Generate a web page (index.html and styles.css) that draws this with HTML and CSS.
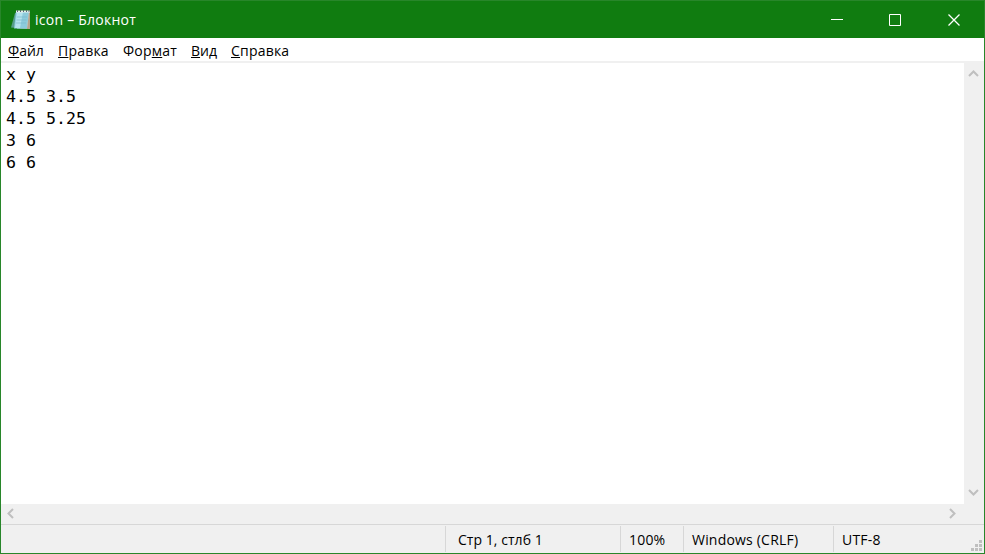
FILE: index.html
```html
<!DOCTYPE html>
<html lang="ru">
<head>
<meta charset="utf-8">
<title>icon – Блокнот</title>
<link rel="stylesheet" href="styles.css">
</head>
<body>
<div class="window">
  <header class="titlebar">
    <svg class="app-icon" width="22" height="22" viewBox="0 0 22 22">
      <path d="M4 4 0 18.500 16 20 18 3z" fill="#579d8b"/>
      <path d="M5 2h14v17.500H6z" fill="#d8e2dd"/>
      <path d="M5 2.500h13L16 19.500H3z" fill="#8ccbdc"/>
      <path d="M6 3h6L9 19H4z" fill="#b4e3ed"/>
      <path d="M18 3 16 20h3V3z" fill="#b4a38c"/>
      <path d="M6 8h10M5.500 11h10M5 14h10" stroke="#79b9cb" stroke-width=".7"/>
      <path d="M5 2.500h14" stroke="#e8eeee" stroke-width="2"/>
      <path d="M6.500 1v2M9.500 1v2M12.500 1v2M15.500 1v2M18 1v2" stroke="#596c70"/>
    </svg>
    <h1 class="title">icon – Блокнот</h1>
    <div class="controls">
      <svg width="58" height="36" viewBox="0 0 58 36"><path d="M20 17.5h12"/></svg>
      <svg width="58" height="36" viewBox="0 0 58 36"><path d="M20.500 12.500h11v11h-11z"/></svg>
      <svg width="58" height="36" viewBox="0 0 58 36"><path class="close" d="m21.500 12.500 11 11m0-11-11 11"/></svg>
    </div>
  </header>
  <nav class="menu">
    <span class="file"><u>Ф</u>айл</span>
    <span class="edit"><u>П</u>равка</span>
    <span class="format">Фор<u>м</u>ат</span>
    <span class="view"><u>В</u>ид</span>
    <span class="help"><u>С</u>правка</span>
  </nav>
  <main class="editor">
    <pre class="text">x y
4.5 3.5
4.5 5.25
3 6
6 6</pre>
    <div class="scroll-y">
      <svg width="20" height="20" viewBox="0 0 20 20"><path d="m5 13 4.500-4.500L14 13"/></svg>
      <svg width="20" height="20" viewBox="0 0 20 20"><path d="m5 6 4.500 4.500L14 6"/></svg>
    </div>
  </main>
  <div class="scroll-x">
    <svg width="20" height="20" viewBox="0 0 20 20"><path d="m12 5-4.500 4.500L12 14"/></svg>
    <svg width="20" height="20" viewBox="0 0 20 20"><path d="m6 5 4.500 4.500L6 14"/></svg>
  </div>
  <footer class="status">
    <div class="cell blank"></div>
    <div class="cell position"><span>Стр 1, стлб 1</span></div>
    <div class="cell zoom"><span>100%</span></div>
    <div class="cell eol"><span>Windows (CRLF)</span></div>
    <div class="cell encoding"><span>UTF-8</span></div>
    <svg class="grip" width="11" height="11" viewBox="0 0 11 11"><path d="M8 0h3v3H8zM4 4h3v3H4zM8 4h3v3H8zM0 8h3v3H0zM4 8h3v3H4zM8 8h3v3H8z"/></svg>
  </footer>
</div>
</body>
</html>
```
FILE: styles.css
```css
* { box-sizing: border-box; }
body { margin: 0; overflow: hidden; font: 14px/20px "Open Sans", "Noto Sans", sans-serif; color: #000; }
svg { display: block; flex: none; }
.window { width: 985px; height: 554px; display: flex; flex-direction: column; border: 1px solid #28862a; background: #fff; }
.titlebar { height: 37px; flex: none; display: flex; align-items: center; background: #107c10; color: #fff; padding-left: 10px; }
.title { margin: 0 0 0 2px; font-size: 14px; font-weight: 400; letter-spacing: .25px; white-space: nowrap; }
.controls { display: flex; margin-left: auto; margin-right: -1px; }
.controls path { fill: none; stroke: #fff; }
.controls .close { stroke-width: 1.3; }
.menu { height: 25px; flex: none; display: flex; gap: 14px; padding: 3px 0 0 7px; border-bottom: 2px solid #f0f0f0; white-space: nowrap; letter-spacing: .2px; }
.menu u { text-decoration-thickness: 1px; text-underline-offset: 1px; text-decoration-skip-ink: none; }
.file { width: 36px; letter-spacing: 0; }
.edit { width: 51px; }
.format { width: 54px; }
.view { width: 26px; letter-spacing: 0; }
.help { width: 58px; }
.editor { flex: 1; display: flex; min-height: 0; }
.text { flex: 1; margin: 0; padding: 1px 0 0 5px; font: 16.6px/22px "DejaVu Sans Mono", monospace; }
.scroll-y { width: 20px; background: #f0f0f0; display: flex; flex-direction: column; justify-content: space-between; }
.scroll-x { height: 20px; flex: none; display: flex; justify-content: space-between; padding-right: 20px; background: #f0f0f0; }
.scroll-y path, .scroll-x path { fill: none; stroke: #bfbfbf; stroke-width: 2; }
.status { height: 29px; flex: none; display: flex; position: relative; background: #f0f0f0; border-top: 1px solid #d7d7d7; white-space: nowrap; letter-spacing: .2px; }
.cell { margin: 1px 0; padding: 4px 0 0 8px; border-right: 1px solid #d7d7d7; }
.blank { width: 445px; }
.position { width: 175px; padding-left: 12px; letter-spacing: .05px; }
.zoom { width: 63px; }
.eol { width: 150px; }
.encoding { flex: 1; border: 0; }
.grip { position: absolute; right: 2px; bottom: 2px; fill: #bfbfbf; }
```
